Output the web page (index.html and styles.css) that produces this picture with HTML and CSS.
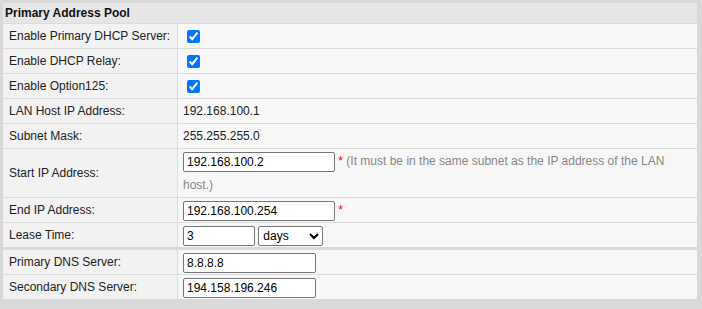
FILE: index.html
```html
<!DOCTYPE html>
<html lang="en">
<head>
    <meta charset="UTF-8">
    <meta name="viewport" content="width=device-width, initial-scale=1.0">
    <title>Primary Address Pool</title>
    <link rel="stylesheet" href="styles.css">
</head>
<body>
    <div class="panel">
        <div class="panel-title">Primary Address Pool</div>

        <table class="cfg">
            <tr>
                <td class="label">Enable Primary DHCP Server:</td>
                <td class="value"><input type="checkbox" checked></td>
            </tr>
            <tr>
                <td class="label">Enable DHCP Relay:</td>
                <td class="value"><input type="checkbox" checked></td>
            </tr>
            <tr>
                <td class="label">Enable Option125:</td>
                <td class="value"><input type="checkbox" checked></td>
            </tr>
            <tr>
                <td class="label">LAN Host IP Address:</td>
                <td class="value">192.168.100.1</td>
            </tr>
            <tr>
                <td class="label">Subnet Mask:</td>
                <td class="value">255.255.255.0</td>
            </tr>
            <tr>
                <td class="label">Start IP Address:</td>
                <td class="value">
                    <input type="text" class="ip" value="192.168.100.2">
                    <span class="req">*</span>
                    <span class="hint">(It must be in the same subnet as the IP address of the LAN host.)</span>
                </td>
            </tr>
            <tr>
                <td class="label">End IP Address:</td>
                <td class="value">
                    <input type="text" class="ip" value="192.168.100.254">
                    <span class="req">*</span>
                </td>
            </tr>
            <tr>
                <td class="label">Lease Time:</td>
                <td class="value">
                    <input type="text" class="lease" value="3">
                    <select class="unit">
                        <option>days</option>
                        <option>hours</option>
                        <option>minutes</option>
                    </select>
                </td>
            </tr>
        </table>

        <table class="cfg">
            <tr>
                <td class="label">Primary DNS Server:</td>
                <td class="value"><input type="text" class="dns" value="8.8.8.8"></td>
            </tr>
            <tr>
                <td class="label">Secondary DNS Server:</td>
                <td class="value"><input type="text" class="dns" value="194.158.196.246"></td>
            </tr>
        </table>
    </div>
</body>
</html>
```

FILE: styles.css
```css
body {
    margin: 0;
    background: #d9d9d9;
    font-family: "Liberation Sans", Arial, sans-serif;
    font-size: 12px;
    color: #222;
}
.panel {
    padding: 3px 5px 11px 3px;
}
.panel-title {
    height: 20px;
    line-height: 20px;
    padding-left: 2px;
    background: #e6e6e6;
    font-weight: bold;
    color: #111;
}
.cfg {
    width: 694px;
    table-layout: fixed;
    border-collapse: collapse;
    background: #f7f7f7;
}
.cfg + .cfg {
    margin-top: 2px;
}
.cfg td {
    line-height: 24px;
    padding: 0;
    border-top: 1px solid #dcdcdc;
}
.cfg td.label {
    width: 168px;
    padding-left: 6px;
    white-space: nowrap;
    background: #f2f2f2;
    border-right: 1px solid #dcdcdc;
}
.cfg td.value {
    padding: 0 14px 0 5px;
}
.cfg input[type="checkbox"] {
    margin: 0 0 0 4px;
    vertical-align: middle;
    accent-color: #0075ff;
}
.cfg input[type="text"] {
    box-sizing: border-box;
    height: 20px;
    margin: 0;
    padding: 1px 3px;
    border: 1px solid #767676;
    border-radius: 2px;
    font-family: "Liberation Sans", Arial, sans-serif;
    font-size: 12px;
    vertical-align: middle;
    background: white;
}
.ip { width: 152px; }
.lease { width: 72px; }
.dns { width: 133px; }
.unit {
    box-sizing: border-box;
    width: 65px;
    height: 20px;
    margin-left: 0;
    font-family: "Liberation Sans", Arial, sans-serif;
    font-size: 12px;
    vertical-align: middle;
}
.req {
    color: #f00;
}
.hint {
    color: #888;
}
```
